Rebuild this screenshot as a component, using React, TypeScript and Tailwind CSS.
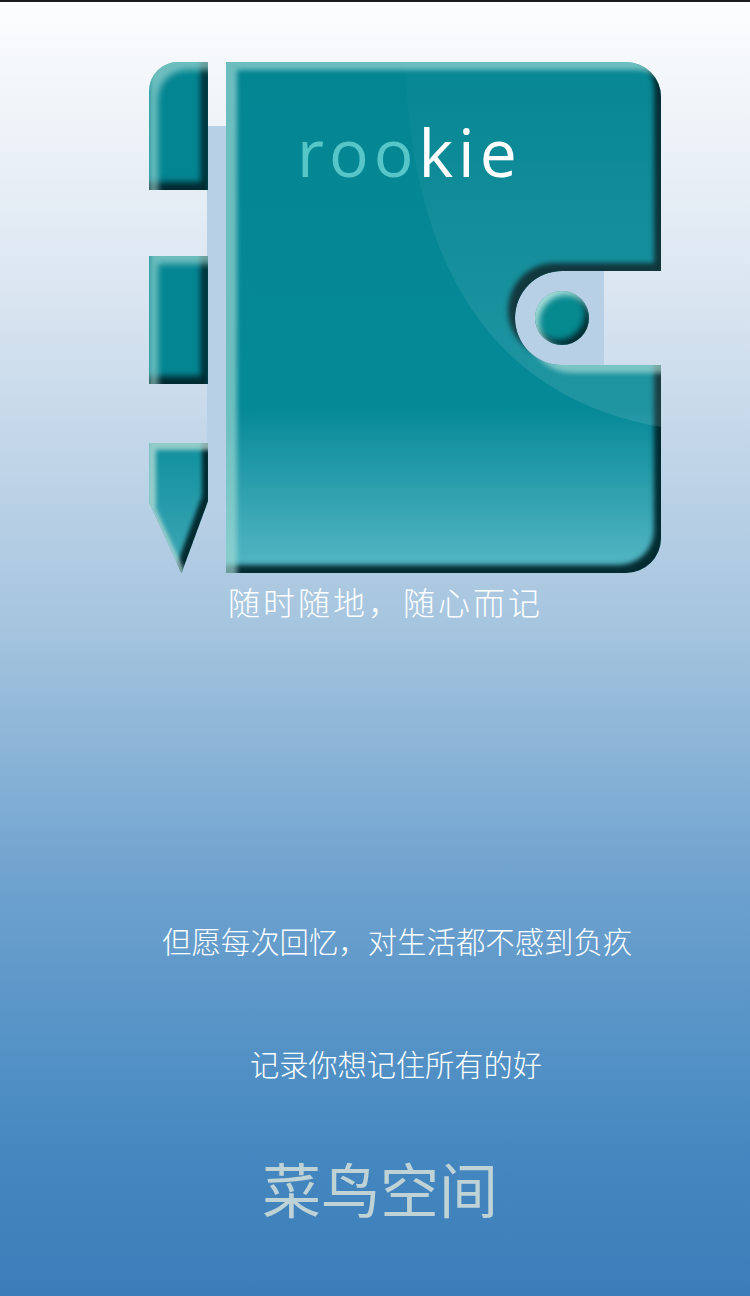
import React from "react";

const bookPath =
  "M226 62 H626 A35 35 0 0 1 661 97 V271 H562 A47 47 0 0 0 562 365 H661 V538 A35 35 0 0 1 626 573 H226 Z";
const tabPath = "M208 62 V190 H149 V91 A29 29 0 0 1 178 62 Z";
const penPath = "M149 443 H208 V501 L181.5 573 L149 502 Z";

type BevelProps = {
  id: string;
  lx: number;
  ly: number;
  dx: number;
  dy: number;
  blur: number;
  light: string;
  lightOpacity: number;
};

// light edge on top/left, dark edge on bottom/right, clipped to the shape
const Bevel = ({ id, lx, ly, dx, dy, blur, light, lightOpacity }: BevelProps) => (
  <filter id={id} x="-15%" y="-15%" width="130%" height="130%" colorInterpolationFilters="sRGB">
    <feComponentTransfer in="SourceAlpha" result="inv">
      <feFuncA type="table" tableValues="1 0" />
    </feComponentTransfer>
    <feOffset in="inv" dx={-dx} dy={-dy} result="darkOff" />
    <feGaussianBlur in="darkOff" stdDeviation={blur} result="darkBlur" />
    <feFlood floodColor="#00242a" floodOpacity="0.95" />
    <feComposite in2="darkBlur" operator="in" />
    <feComposite in2="SourceAlpha" operator="in" result="dark" />
    <feOffset in="inv" dx={lx} dy={ly} result="lightOff" />
    <feGaussianBlur in="lightOff" stdDeviation={blur} result="lightBlur" />
    <feFlood floodColor={light} floodOpacity={lightOpacity} />
    <feComposite in2="lightBlur" operator="in" />
    <feComposite in2="SourceAlpha" operator="in" result="lit" />
    <feMerge>
      <feMergeNode in="SourceGraphic" />
      <feMergeNode in="dark" />
      <feMergeNode in="lit" />
    </feMerge>
  </filter>
);

const Logo = () => (
  <svg width="750" height="600" viewBox="0 2 750 600" className="block">
    <defs>
      <linearGradient id="bookFill" gradientUnits="userSpaceOnUse" x1="0" y1="62" x2="0" y2="573">
        <stop offset="0" stopColor="#048592" />
        <stop offset="0.68" stopColor="#068997" />
        <stop offset="0.97" stopColor="#4fb3c1" />
      </linearGradient>
      <linearGradient id="penFill" gradientUnits="userSpaceOnUse" x1="0" y1="443" x2="0" y2="573">
        <stop offset="0" stopColor="#10909d" />
        <stop offset="1" stopColor="#3fa7b6" />
      </linearGradient>
      <linearGradient id="sheen" gradientUnits="userSpaceOnUse" x1="0" y1="62" x2="0" y2="427">
        <stop offset="0" stopColor="#ffffff" stopOpacity="0.01" />
        <stop offset="1" stopColor="#ffffff" stopOpacity="0.11" />
      </linearGradient>
      <Bevel id="bevelBook" lx={11} ly={8} dx={7} dy={8} blur={2.6} light="#a6dcd6" lightOpacity={0.65} />
      <Bevel id="bevelTab" lx={9} ly={8} dx={7} dy={8} blur={3} light="#a6dcd6" lightOpacity={0.65} />
      <Bevel id="bevelPen" lx={7} ly={7} dx={6} dy={5} blur={2} light="#c4e2dc" lightOpacity={0.72} />
      <Bevel id="bevelKnob" lx={4} ly={4} dx={4} dy={5} blur={3.2} light="#c4ece6" lightOpacity={0.85} />
      <clipPath id="bookClip">
        <path d={bookPath} />
      </clipPath>
    </defs>

    {/* backing sheet behind the cover */}
    <rect x="207" y="126" width="20" height="384" fill="#b8d0e6" />
    <rect x="500" y="271" width="104" height="94" fill="#b8d0e6" />

    <path d={bookPath} fill="url(#bookFill)" filter="url(#bevelBook)" />
    <path
      d="M405 62 C412 250 480 395 661 427 V365 H562 A47 47 0 0 1 562 271 H661 V97 A35 35 0 0 0 626 62 Z"
      fill="url(#sheen)"
      clipPath="url(#bookClip)"
    />

    <path d={tabPath} fill="#048592" filter="url(#bevelTab)" />
    <rect x="149" y="256" width="59" height="128" fill="#048592" filter="url(#bevelTab)" />
    <path d={penPath} fill="url(#penFill)" filter="url(#bevelPen)" />
    <circle cx="562" cy="318" r="27" fill="#068a90" filter="url(#bevelKnob)" />
  </svg>
);

export default function App() {
  return (
    <div className="w-[750px] h-[1296px] overflow-hidden border-t-2 border-[#1c1c1c] bg-[linear-gradient(180deg,#fcfdfe_0%,#dbe6f1_22%,#a6c5df_48%,#6ca1ce_69%,#4689c1_88%,#3a7db8_100%)] font-['Noto_Sans_CJK_SC','Noto_Sans',sans-serif]">
      <div className="relative h-[586px]">
        <Logo />
        <span className="absolute left-[297px] top-[104px] text-[66px] leading-[90px] tracking-[5px] font-medium text-[#56c6c8] font-['Open_Sans',sans-serif]">
          roo<span className="text-white">kie</span>
        </span>
      </div>
      <div className="-mt-[7px] pl-[228px] text-[32px] leading-[40px] tracking-[3px] font-light text-white">
        随时随地，随心而记
      </div>
      <div className="mt-[299px] pl-[162px] text-[29.4px] leading-[40px] font-light text-white">
        但愿每次回忆，对生活都不感到负疚
      </div>
      <div className="mt-[83px] pl-[250px] text-[29.2px] leading-[40px] font-light text-white">
        记录你想记住所有的好
      </div>
      <div className="mt-[67px] pl-[262px] text-[59px] leading-[76px] text-[#bfd3d6]">
        菜鸟空间
      </div>
    </div>
  );
}
